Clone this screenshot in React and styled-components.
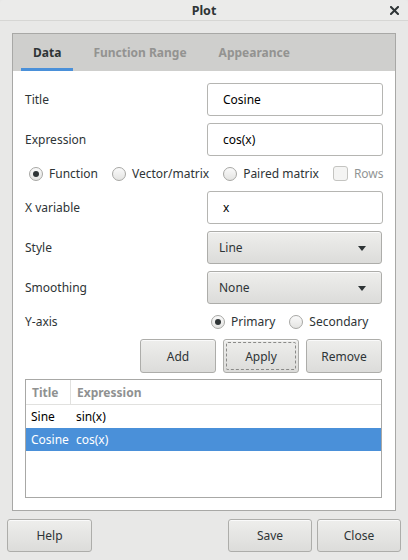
import React from "react";
import styled, { createGlobalStyle, css } from "styled-components";

const Global = createGlobalStyle`
    html, body {
        margin: 0;
        padding: 0;
        background: #e8e8e7;
    }
    * { box-sizing: border-box; }
    body {
        font-family: "Noto Sans", "Open Sans", sans-serif;
        font-size: 12px;
        color: #2e3436;
        white-space: nowrap;
    }
`;

const Window = styled.div`
    width: 408px;
    height: 560px;
    display: flex;
    flex-direction: column;
    background: #e8e8e7;
`;

const TitleBar = styled.div`
    height: 21px;
    flex: none;
    display: flex;
    align-items: center;
    justify-content: center;
    position: relative;
    border-bottom: 1px solid #d6d6d4;
    background: #ebebea;
    border-radius: 4px 4px 0 0;
    font-weight: bold;
    font-size: 12.5px;
    color: #2e3436;
`;

const CloseIcon = styled.div`
    position: absolute;
    right: 9px;
    top: 6px;
    width: 9px;
    height: 9px;
    display: flex;
`;

const Body = styled.div`
    flex: 1;
    display: flex;
    flex-direction: column;
    padding: 12px 7px 8px 7px;
    gap: 8px;
`;

const Notebook = styled.div`
    margin: 0 5px;
    border: 1px solid #a8a8a6;
    flex: 1;
    display: flex;
    flex-direction: column;
    background: #fff;
`;

const Tabs = styled.div`
    height: 37px;
    flex: none;
    display: flex;
    background: #cfcfcd;
    padding-left: 8px;
`;

const Tab = styled.div`
    height: 37px;
    padding: 0 12px;
    display: flex;
    align-items: center;
    font-weight: bold;
    color: ${p => (p.active ? "#2e3436" : "#939391")};
    margin-right: 8px;
    ${p => p.active && css`
        box-shadow: inset 0 -3px 0 #4a90d9;
    `}
`;

const Page = styled.div`
    flex: 1;
    display: flex;
    flex-direction: column;
    padding: 12px;
    gap: 7px;
`;

const Row = styled.div`
    display: flex;
    align-items: center;
    justify-content: space-between;
    height: ${p => p.h || 33}px;
`;

const Label = styled.div`
    color: #2e3436;
`;

const Entry = styled.div`
    width: 176px;
    height: 33px;
    border: 1px solid #b5b5b2;
    border-radius: 3px;
    background: #fff;
    display: flex;
    align-items: center;
    padding-left: 15px;
    color: #000;
`;

const buttonLook = css`
    border: 1px solid #adadaa;
    border-radius: 3px;
    background: linear-gradient(#eeeeec, #dcdcda);
    box-shadow: inset 0 1px #fafafa;
`;

const Combo = styled.div`
    ${buttonLook};
    width: 175px;
    height: 33px;
    margin-right: 1px;
    display: flex;
    align-items: center;
    justify-content: space-between;
    padding: 0 15px 0 11px;
    color: #2e3436;
`;

const Arrow = styled.div`
    width: 0;
    height: 0;
    border-left: 4.5px solid transparent;
    border-right: 4.5px solid transparent;
    border-top: 5px solid #2e3436;
    margin-top: 2px;
`;

const ChoiceRow = styled.div`
    display: flex;
    align-items: center;
    height: 21px;
    padding-left: 4px;
    gap: 14px;
`;

const Choice = styled.div`
    display: flex;
    align-items: center;
    gap: 6px;
    color: ${p => (p.disabled ? "#929595" : "#2e3436")};
`;

const Radio = styled.span`
    width: 14px;
    height: 14px;
    flex: none;
    border-radius: 50%;
    border: 1px solid #a7a7a4;
    background: linear-gradient(#fafafa, #e4e4e2);
    display: flex;
    align-items: center;
    justify-content: center;
    &::after {
        content: "";
        width: 6px;
        height: 6px;
        border-radius: 50%;
        background: ${p => (p.checked ? "#2e3436" : "transparent")};
    }
`;

const Check = styled.span`
    width: 15px;
    height: 15px;
    flex: none;
    border-radius: 3px;
    border: 1px solid #c4c4c1;
    background: #f4f4f3;
`;

const AxisGroup = styled.div`
    width: 176px;
    display: flex;
    align-items: center;
    gap: 14px;
    padding-left: 4px;
`;

const ButtonRow = styled.div`
    display: flex;
    justify-content: flex-end;
    gap: 7px;
    height: 34px;
    margin-right: 1px;
`;

const Button = styled.div`
    ${buttonLook};
    width: ${p => p.w || 76}px;
    height: ${p => p.h || 34}px;
    display: flex;
    align-items: center;
    justify-content: center;
    color: #2e3436;
    position: relative;
    ${p => p.focus && css`
        &::after {
            content: "";
            position: absolute;
            inset: 2px;
            border: 1px dashed #8a8a88;
            border-radius: 2px;
        }
    `}
`;

const Tree = styled.div`
    flex: 1;
    margin-top: -1px;
    border: 1px solid #a8a8a6;
    display: flex;
    flex-direction: column;
    background: #fff;
    margin-right: 1px;
`;

const TreeHeader = styled.div`
    height: 25px;
    display: flex;
    border-bottom: 1px solid #e1e1df;
    color: #8f9191;
    font-weight: bold;
`;

const HeadCell = styled.div`
    width: ${p => (p.w ? `${p.w}px` : "auto")};
    flex: ${p => (p.w ? "none" : 1)};
    display: flex;
    align-items: center;
    padding-left: 6px;
    border-right: ${p => (p.w ? "1px solid #e1e1df" : "none")};
`;

const TreeRow = styled.div`
    height: 23px;
    display: flex;
    align-items: center;
    background: ${p => (p.selected ? "#4a90d9" : "#fff")};
    color: ${p => (p.selected ? "#fff" : "#000")};
`;

const Cell = styled.div`
    width: ${p => (p.w ? `${p.w}px` : "auto")};
    flex: ${p => (p.w ? "none" : 1)};
    padding-left: 5px;
`;

const Footer = styled.div`
    display: flex;
    height: 33px;
    gap: 5px;
    flex: none;
`;

const Spacer = styled.div`
    flex: 1;
`;

const plots = [
    { title: "Sine", expr: "sin(x)" },
    { title: "Cosine", expr: "cos(x)" },
];

export default function App() {
    return (
        <Window>
            <Global />
            <TitleBar>
                Plot
                <CloseIcon>
                    <svg width="9" height="9" viewBox="0 0 9 9">
                        <path d="M1 1L8 8M8 1L1 8" stroke="#2e3436" strokeWidth="2" strokeLinecap="square" />
                    </svg>
                </CloseIcon>
            </TitleBar>
            <Body>
                <Notebook>
                    <Tabs>
                        <Tab active>Data</Tab>
                        <Tab>Function Range</Tab>
                        <Tab>Appearance</Tab>
                    </Tabs>
                    <Page>
                        <Row>
                            <Label>Title</Label>
                            <Entry>Cosine</Entry>
                        </Row>
                        <Row>
                            <Label>Expression</Label>
                            <Entry>cos(x)</Entry>
                        </Row>
                        <ChoiceRow>
                            <Choice><Radio checked />Function</Choice>
                            <Choice><Radio />Vector/matrix</Choice>
                            <Choice><Radio />Paired matrix</Choice>
                            <Choice disabled><Check />Rows</Choice>
                        </ChoiceRow>
                        <Row>
                            <Label>X variable</Label>
                            <Entry>x</Entry>
                        </Row>
                        <Row>
                            <Label>Style</Label>
                            <Combo>Line<Arrow /></Combo>
                        </Row>
                        <Row>
                            <Label>Smoothing</Label>
                            <Combo>None<Arrow /></Combo>
                        </Row>
                        <Row h={21}>
                            <Label>Y-axis</Label>
                            <AxisGroup>
                                <Choice><Radio checked />Primary</Choice>
                                <Choice><Radio />Secondary</Choice>
                            </AxisGroup>
                        </Row>
                        <ButtonRow>
                            <Button>Add</Button>
                            <Button focus>Apply</Button>
                            <Button>Remove</Button>
                        </ButtonRow>
                        <Tree>
                            <TreeHeader>
                                <HeadCell w={45}>Title</HeadCell>
                                <HeadCell>Expression</HeadCell>
                            </TreeHeader>
                            {plots.map((p, i) => (
                                <TreeRow key={p.title} selected={i === 1}>
                                    <Cell w={45}>{p.title}</Cell>
                                    <Cell>{p.expr}</Cell>
                                </TreeRow>
                            ))}
                        </Tree>
                    </Page>
                </Notebook>
                <Footer>
                    <Button w={85} h={33}>Help</Button>
                    <Spacer />
                    <Button w={84} h={33}>Save</Button>
                    <Button w={84} h={33}>Close</Button>
                </Footer>
            </Body>
        </Window>
    );
}
